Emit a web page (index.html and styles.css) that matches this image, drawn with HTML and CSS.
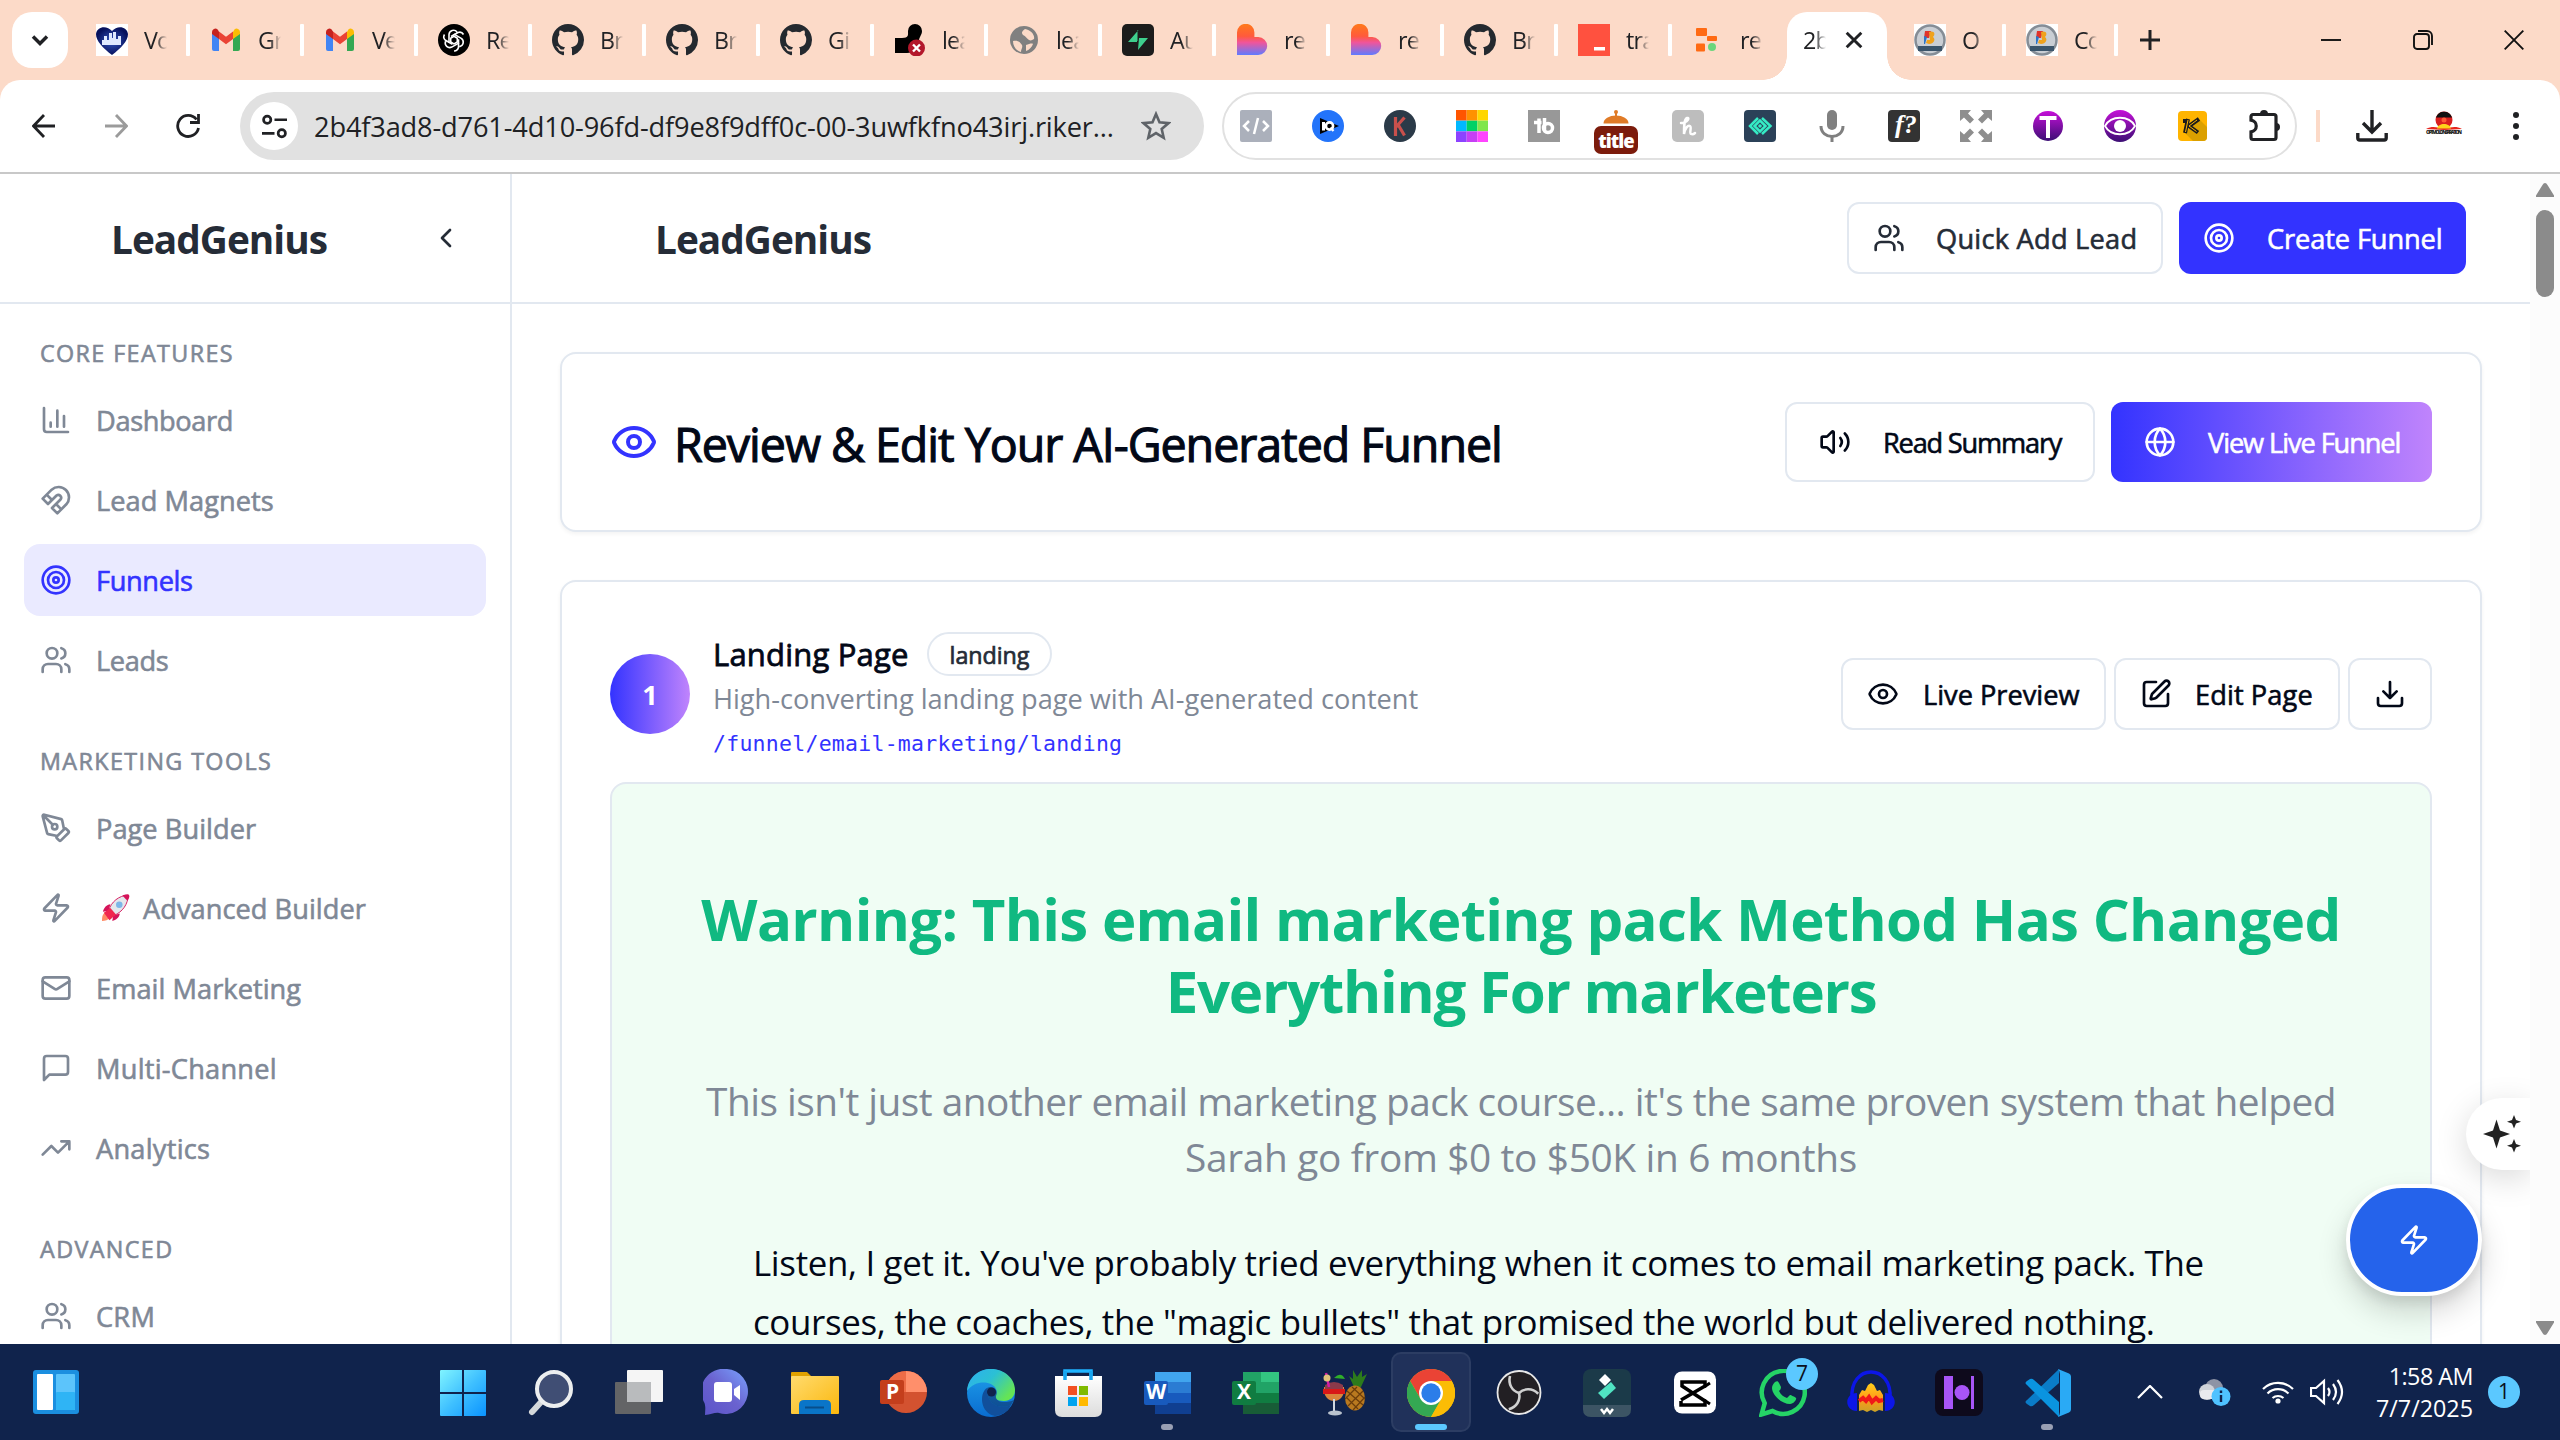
FILE: index.html
```html
<!DOCTYPE html>
<html lang="en">
<head>
<meta charset="utf-8">
<title>LeadGenius</title>
<link rel="stylesheet" href="styles.css">
</head>
<body>
<svg class="defs" aria-hidden="true">
  <defs>
    <linearGradient id="g-win" x1="0" y1="0" x2="1" y2="1"><stop offset="0" stop-color="#80f4ff"/><stop offset=".5" stop-color="#3fc0ff"/><stop offset="1" stop-color="#0a93ff"/></linearGradient>
    <linearGradient id="g-chat" x1="1" y1="0" x2="0" y2="1"><stop offset="0" stop-color="#79a4ff"/><stop offset=".5" stop-color="#6a62cf"/><stop offset="1" stop-color="#5b54c8"/></linearGradient>
    <linearGradient id="g-folder" x1="0" y1="0" x2="1" y2="1"><stop offset="0" stop-color="#ffdb6e"/><stop offset="1" stop-color="#fbb70c"/></linearGradient>
    <linearGradient id="g-edge" x1="0" y1="0" x2="1" y2=".6"><stop offset="0" stop-color="#2eaef0"/><stop offset=".5" stop-color="#2bc0d4"/><stop offset="1" stop-color="#65e455"/></linearGradient>
    <linearGradient id="g-edge2" x1="0" y1="0" x2="0" y2="1"><stop offset="0" stop-color="#1fa0ea"/><stop offset="1" stop-color="#0a6cd0"/></linearGradient>
    <linearGradient id="g-store" x1="0" y1="0" x2="0" y2="1"><stop offset="0" stop-color="#fff"/><stop offset="1" stop-color="#dcdcdc"/></linearGradient>
    <linearGradient id="g-purple" x1="0" y1="0" x2="0" y2="1"><stop offset="0" stop-color="#c510d8"/><stop offset="1" stop-color="#3c0f74"/></linearGradient>
    <linearGradient id="g-heart" x1="0" y1="0" x2="0" y2="1"><stop offset="0" stop-color="#ff7a1a"/><stop offset=".4" stop-color="#ff5a3c"/><stop offset=".6" stop-color="#f0559b"/><stop offset="1" stop-color="#5f7bff"/></linearGradient>
    <linearGradient id="g-aud" x1="0" y1="0" x2="0" y2="1"><stop offset="0" stop-color="#ffcf1a"/><stop offset=".55" stop-color="#ff9a1a"/><stop offset="1" stop-color="#c9a227"/></linearGradient>
    <radialGradient id="g-navy"><stop offset="0" stop-color="#3457c0"/><stop offset="1" stop-color="#06105c"/></radialGradient>

    <symbol id="users" viewBox="0 0 24 24"><path d="M16 21v-2a4 4 0 0 0-4-4H6a4 4 0 0 0-4 4v2"/><circle cx="9" cy="7" r="4"/><path d="M22 21v-2a4 4 0 0 0-3-3.87M16 3.13a4 4 0 0 1 0 7.75"/></symbol>
    <symbol id="target" viewBox="0 0 24 24"><circle cx="12" cy="12" r="10"/><circle cx="12" cy="12" r="6"/><circle cx="12" cy="12" r="2"/></symbol>
    <symbol id="zap" viewBox="0 0 24 24"><path d="M4 14a1 1 0 0 1-.78-1.63l9.9-10.2a.5.5 0 0 1 .86.46l-1.92 6.02A1 1 0 0 0 13 10h7a1 1 0 0 1 .78 1.63l-9.9 10.2a.5.5 0 0 1-.86-.46l1.92-6.02A1 1 0 0 0 11 14z"/></symbol>
    <symbol id="eye" viewBox="0 0 24 24"><path d="M2.062 12.348a1 1 0 0 1 0-.696 10.75 10.75 0 0 1 19.876 0 1 1 0 0 1 0 .696 10.75 10.75 0 0 1-19.876 0"/><circle cx="12" cy="12" r="3"/></symbol>
    <symbol id="github" viewBox="0 0 16 16"><path fill="#24292f" d="M8 0C3.58 0 0 3.58 0 8c0 3.54 2.29 6.53 5.47 7.59.4.07.55-.17.55-.38 0-.19-.01-.82-.01-1.49-2.01.37-2.53-.49-2.69-.94-.09-.23-.48-.94-.82-1.13-.28-.15-.68-.52-.01-.53.63-.01 1.08.58 1.23.82.72 1.21 1.87.87 2.33.66.07-.52.28-.87.51-1.07-1.78-.2-3.64-.89-3.64-3.95 0-.87.31-1.59.82-2.15-.08-.2-.36-1.02.08-2.12 0 0 .67-.21 2.2.82.64-.18 1.32-.27 2-.27.68 0 1.36.09 2 .27 1.53-1.04 2.2-.82 2.2-.82.44 1.1.16 1.92.08 2.12.51.56.82 1.27.82 2.15 0 3.07-1.87 3.75-3.65 3.95.29.25.54.73.54 1.48 0 1.07-.01 1.93-.01 2.2 0 .21.15.46.55.38A8.013 8.013 0 0016 8c0-4.42-3.58-8-8-8z"/></symbol>
    <symbol id="gmail" viewBox="0 0 32 32"><path fill="#4285f4" d="M2 9v16a2 2 0 0 0 2 2h5V14z"/><path fill="#34a853" d="M30 9v16a2 2 0 0 1-2 2h-5V14z"/><path fill="#fbbc04" d="M23 8v7l7-5V8a3.4 3.4 0 0 0-5.400-2.700z"/><path fill="#ea4335" d="M9 15V7.500l7 5.200 7-5.200V15l-7 5.300z"/><path fill="#c5221f" d="M2 8v2l7 5V7.500L7.400 5.300A3.400 3.400 0 0 0 2 8z"/></symbol>
    <symbol id="heart" viewBox="0 0 32 32"><path fill="url(#g-heart)" d="M1 31V8.500a8.700 8.700 0 0 1 17.400 0V13h3.800a9 9 0 0 1 0 18z"/></symbol>
    <symbol id="coin" viewBox="0 0 32 32"><path fill="#fff" d="M0 0h32v32H0z"/><circle cx="16" cy="16" r="14.500" fill="#c9ced4" stroke="#858d96" stroke-width="2.500"/><path fill="#e0342c" d="M11 7h6l-2 7h-5z"/><path fill="#2b75c9" d="M10 12l3 1-2 7h-1z"/><path fill="#f0a21c" d="M15 8c5-2 7 2 4 5 3 2 1 7-4 7l-3-1 1-3h3z"/><path fill="#3b556b" d="M4 22h24v5H4z"/></symbol>
  </defs>
</svg>

<header class="browser">
  <div class="tabstrip">
    <div class="tab-search"><svg viewBox="0 0 24 24"><path d="M6 9l6 6 6-6"/></svg></div>
    <div class="tabs">
      <div class="tab"><svg class="fav" viewBox="0 0 32 32"><path fill="#fff" d="M0 0h32v32H0z"/><path fill="url(#g-navy)" d="M16 31C7 24 0 17 0 10 1 2 11 1 16 7c5-6 15-5 16 3 0 7-7 14-16 21z"/><path fill="#dfe9ff" d="M6 21v-5h2v-4h3v4h2V9h3v5h1V8h3v7h2v-3h3v9z"/></svg><span class="tab-label">Vo</span></div>
      <div class="tab"><svg class="fav"><use href="#gmail"/></svg><span class="tab-label">Gr</span></div>
      <div class="tab"><svg class="fav"><use href="#gmail"/></svg><span class="tab-label">Ve</span></div>
      <div class="tab"><svg class="fav" viewBox="0 0 32 32"><circle cx="16" cy="16" r="16"/><g fill="none" stroke="#fff" stroke-width="1.600"><path id="petal" d="M11 19V10.500a4.500 4.500 0 0 1 8-2.500M13 12.500l7-4a4.500 4.500 0 0 1 5.500 2"/><use href="#petal" transform="rotate(120 16 16)"/><use href="#petal" transform="rotate(240 16 16)"/><path d="M16 12.300l3.300 1.900v3.800L16 19.900 12.700 18v-3.800z"/></g></svg><span class="tab-label">Re</span></div>
      <div class="tab"><svg class="fav"><use href="#github"/></svg><span class="tab-label">Br</span></div>
      <div class="tab"><svg class="fav"><use href="#github"/></svg><span class="tab-label">Br</span></div>
      <div class="tab"><svg class="fav"><use href="#github"/></svg><span class="tab-label">Gi</span></div>
      <div class="tab"><svg class="fav" viewBox="0 0 32 32"><path d="M1 29V14h7c7 0 6-3 6-7a7 7 0 0 1 14 0c0 4-3 6-3 10 0 8-6 12-12 12z"/><circle cx="22.500" cy="24" r="8.500" fill="#b3172b"/><path d="M19 20.500l7 7m0-7l-7 7" stroke="#fff" stroke-width="2.400"/></svg><span class="tab-label">lea</span></div>
      <div class="tab"><svg class="fav" viewBox="0 0 32 32"><circle cx="16" cy="16" r="14" fill="#808080"/><path fill="#fbdac8" d="M5 17c5-1 7 1 9 4 1 3-1 4-1 7C8 27 5 22 5 17zM17 5c-3 2-4 4-2 6 3 1 3 3 6 5 2 1 3 0 5-1 1-4-3-9-9-10zM18 21c3-1 6-2 7-1-1 3-4 6-7 7z"/></svg><span class="tab-label">lea</span></div>
      <div class="tab"><svg class="fav" viewBox="0 0 32 32"><rect width="32" height="32" rx="5" fill="#1c1c1c"/><path fill="#3ecf8e" d="M16.500 6L6 18h9v-1l.5 0V6zM16 26l10-12h-9z"/></svg><span class="tab-label">Au</span></div>
      <div class="tab"><svg class="fav"><use href="#heart"/></svg><span class="tab-label">re</span></div>
      <div class="tab"><svg class="fav"><use href="#heart"/></svg><span class="tab-label">re</span></div>
      <div class="tab"><svg class="fav"><use href="#github"/></svg><span class="tab-label">Br</span></div>
      <div class="tab"><svg class="fav" viewBox="0 0 32 32"><path fill="#ff513f" d="M0 0h32v32H0z"/><path fill="#fff" d="M16 23h11v3.500H16z"/></svg><span class="tab-label">tra</span></div>
      <div class="tab tab-last"><svg class="fav" viewBox="0 0 32 32"><g fill="#ff6a13"><rect x="4" y="4" width="11" height="8" rx="1"/><rect x="15" y="12" width="10" height="5" rx="1"/><rect x="4" y="19.500" width="9" height="8" rx="1"/></g><circle cx="20" cy="23" r="4" fill="#6bd67c"/></svg><span class="tab-label">re</span></div>
    </div>
    <div class="tab-active"><span class="tab-label">2b</span><svg viewBox="0 0 16 16"><path d="M1.500 1.500l13 13m0-13l-13 13"/></svg></div>
    <div class="tabs tabs-right">
      <div class="tab"><svg class="fav"><use href="#coin"/></svg><span class="tab-label">O</span></div>
      <div class="tab"><svg class="fav"><use href="#coin"/></svg><span class="tab-label">Co</span></div>
    </div>
    <svg class="new-tab" viewBox="0 0 20 20"><path d="M10 0v20M0 10h20"/></svg>
    <div class="window-controls">
      <svg viewBox="0 0 20 20"><path d="M0 10h20"/></svg>
      <svg viewBox="0 0 20 20"><rect x="1" y="4" width="15" height="15" rx="3"/><path d="M5 1h9a5 5 0 0 1 5 5v9"/></svg>
      <svg viewBox="0 0 20 20"><path d="M.7.7l18.600 18.600M19.300.7L.7 19.300"/></svg>
    </div>
  </div>
  <div class="toolbar">
    <div class="nav-buttons">
      <svg viewBox="0 0 24 24"><path d="M23 12H2M12 1L1.500 12 12 23"/></svg>
      <svg class="disabled" viewBox="0 0 24 24"><path d="M1 12h21M12 1l10.500 11L12 23"/></svg>
      <svg viewBox="0 0 24 24"><path d="M20.500 5.500A10.500 10.500 0 1 0 22.500 14M22.500 0v8.500H14"/></svg>
    </div>
    <div class="omnibox">
      <span class="site-info"><svg viewBox="0 0 24 24"><circle cx="5" cy="5.500" r="3.500"/><path d="M12 5.500h12M0 18.500h12"/><circle cx="19" cy="18.500" r="3.500"/></svg></span>
      <span class="url">2b4f3ad8-d761-4d10-96fd-df9e8f9dff0c-00-3uwfkfno43irj.riker...</span>
      <svg class="star" viewBox="0 0 30 30"><path d="M15 3l3.500 8.300 9 .8-6.800 5.900 2 8.800L15 22.100l-7.700 4.700 2-8.800-6.800-5.900 9-.8z"/></svg>
    </div>
    <div class="extensions">
      <svg viewBox="0 0 32 32"><rect width="32" height="32" rx="2" fill="#abb0bb"/><path d="M9 11l-5 5 5 5M23 11l5 5-5 5M18 8l-4 16" fill="none" stroke="#fff" stroke-width="2.500"/></svg>
      <svg viewBox="0 0 32 32"><circle cx="16" cy="16" r="16" fill="#2374fa"/><path d="M8 8l19 8-19 8z"/><path d="M11.500 12v8.500" stroke="#fff" stroke-width="3"/><circle cx="17.500" cy="16" r="3.600" fill="#000" stroke="#fff" stroke-width="2.600"/><path d="M18.500 17.500l3 3.500" stroke="#fff" stroke-width="2.200"/></svg>
      <svg viewBox="0 0 32 32"><circle cx="16" cy="16" r="16" fill="#2b3a48"/><path d="M11.500 7v19M20.500 7.500L12 17M14 14.500l6.500 11" fill="none" stroke="#c9504c" stroke-width="3.200"/></svg>
      <svg viewBox="0 0 33 33"><path fill="#ff5500" d="M0 0h11v11H0z"/><path fill="#ff9100" d="M11 0h11v11H11z"/><path fill="#ffd600" d="M22 0h11v11H22z"/><path fill="#00b8ff" d="M0 11h11v11H0z"/><path fill="#00d166" d="M11 11h11v11H11z"/><path fill="#7fe64c" d="M22 11h11v11H22z"/><path fill="#8c43ff" d="M0 22h11v11H0z"/><path fill="#c63ff5" d="M11 22h11v11H11z"/><path fill="#ff45ff" d="M22 22h11v11H22z"/></svg>
      <svg viewBox="0 0 32 32"><path fill="#989898" d="M0 0h32v32H0z"/><path d="M11 8.500v14.500M6 12.500h7.500M16.500 8v13" stroke="#fff" stroke-width="3.500" fill="none"/><circle cx="20" cy="18" r="4.500" fill="none" stroke="#fff" stroke-width="3.500"/></svg>
      <span class="ext-title"><svg viewBox="0 0 32 16"><path fill="#e07b27" d="M3.500 13.500a12.500 8 0 0 1 25 0z"/><path d="M16 6V2" stroke="#e07b27" stroke-width="2"/><circle cx="16" cy="2" r="2" fill="#e07b27"/></svg><b>title</b></span>
      <svg viewBox="0 0 32 32"><rect width="32" height="32" rx="5" fill="#bdbdbd"/><path d="M9 13c7 0 9-6 6-5s-3 9-3 16c1-6 4-9 6-8s-1 7 1 8 3 0 4-1" stroke="#fff" stroke-width="2.500" fill="none" stroke-linecap="round"/></svg>
      <svg viewBox="0 0 32 32"><rect width="32" height="32" rx="4" fill="#2b4158"/><path d="M14 8l-8 8 8 8M18 8l8.500 8-8.500 8M16 10.500L10.500 16l5.500 5.500 5.500-5.500z" stroke="#35ecc5" stroke-width="2.500" fill="none"/><circle cx="16" cy="16" r="1.800" fill="#35ecc5"/></svg>
      <svg viewBox="0 0 32 32"><rect x="11" y="0" width="10" height="20" rx="5" fill="#808080"/><path d="M5 16c0 14 22 14 22 0M16 26v6" stroke="#808080" stroke-width="3" fill="none"/></svg>
      <svg viewBox="0 0 32 32"><rect width="32" height="32" rx="4" fill="#333"/><text x="7" y="23" class="glyph glyph-serif">f?</text></svg>
      <svg viewBox="0 0 32 32"><path fill="#8e8e8e" d="M0 0h11L8 3.500l6 6-4 4-6-6L0 11zM32 0v11l-4-3.500-6 6-4-4 6-6L21 0zM0 32V21l4 3.500 6-6 4 4-6 6 3 3.500zM32 32H21l3-3.500-6-6 4-4 6 6 4-3.500z"/></svg>
      <svg viewBox="0 0 32 32"><circle cx="16" cy="16" r="15" fill="url(#g-purple)"/><path d="M7.500 8h17M16 8v20" stroke="#fff" stroke-width="4"/></svg>
      <svg viewBox="0 0 32 32"><circle cx="16" cy="16" r="16" fill="url(#g-purple)"/><path d="M1 16c6-11 24-11 30 0-6 11-24 11-30 0z" fill="none" stroke="#fff" stroke-width="1.800"/><circle cx="16" cy="16" r="6" fill="#fff"/></svg>
      <svg viewBox="0 0 32 32"><rect x="2" y="1" width="29" height="30" rx="4" fill="#ffb400"/><path fill="#dba000" d="M23 9l8 8v10a4 4 0 0 1-4 4H17l-8-8z"/><path d="M12 9l-3 14M23 9l-10 7 9 6.500M7 11h4" fill="none" stroke="#1b1b1b" stroke-width="4"/><path d="M12 10L9.500 22M21 10l-8 6 7.500 5.500" fill="none" stroke="#ffb400" stroke-width="1"/></svg>
      <svg viewBox="0 0 32 32"><path d="M3 6.500a2 2 0 0 1 2-2h21a2 2 0 0 1 2 2v21a2 2 0 0 1-2 2H5a2 2 0 0 1-2-2v-5.700c7-1 7-10.600 0-11.600z" fill="none" stroke="#202124" stroke-width="3.200"/><path fill="#202124" d="M12 4a4 4 0 0 1 8 0zM28 13a4 4 0 0 1 0 8z"/></svg>
    </div>
    <span class="toolbar-sep"></span>
    <div class="toolbar-end">
      <svg viewBox="0 0 32 32"><path d="M16 0v21M7 13l9 9 9-9M1.800 23v5a2 2 0 0 0 2 2h24.400a2 2 0 0 0 2-2v-5" fill="none" stroke="#202124" stroke-width="3.400"/></svg>
      <svg class="avatar" viewBox="0 0 38 32"><circle cx="19" cy="10" r="8.500" fill="#d91e1e"/><path d="M11 7.500a8.500 8.500 0 0 1 16 0z" fill="#111"/><circle cx="19" cy="10" r="2.500" fill="#ff5a36"/><path d="M1 19c7-4 11-1 18-1s11-3 18 1l-18 1z" fill="#e6241c"/><path d="M12 18.500c1-6 13-6 14 0z" fill="#ffd21a"/><text x="1" y="23.500" class="glyph avatar-text" textLength="36">OPTMOLD NSPIRATION</text></svg>
      <svg viewBox="0 0 32 32"><g fill="#202124"><circle cx="16" cy="5" r="3"/><circle cx="16" cy="16" r="3"/><circle cx="16" cy="27" r="3"/></g></svg>
    </div>
  </div>
</header>

<div class="viewport">
  <div class="app">
    <aside class="sidebar">
      <div class="sidebar-head"><span class="brand">LeadGenius</span><svg class="icon" viewBox="0 0 24 24"><path d="m15 18-6-6 6-6"/></svg></div>
      <nav class="menu">
        <section class="menu-group">
          <h3>CORE FEATURES</h3>
          <a class="tight"><svg class="icon" viewBox="0 0 24 24"><path d="M3 3v16a2 2 0 0 0 2 2h16M18 17V9M13 17V5M8 17v-3"/></svg>Dashboard</a>
          <a><svg class="icon" viewBox="0 0 24 24"><path d="m6 15-4-4 6.750-6.770a7.790 7.790 0 0 1 11 11L13 22l-4-4 6.390-6.360a2.140 2.140 0 0 0-3-3L6 15M5 8l4 4M12 15l4 4"/></svg>Lead Magnets</a>
          <a class="active tight"><svg class="icon"><use href="#target"/></svg>Funnels</a>
          <a class="tight"><svg class="icon"><use href="#users"/></svg>Leads</a>
        </section>
        <section class="menu-group">
          <h3>MARKETING TOOLS</h3>
          <a><svg class="icon" viewBox="0 0 24 24"><path d="M15.707 21.293a1 1 0 0 1-1.414 0l-1.586-1.586a1 1 0 0 1 0-1.414l5.586-5.586a1 1 0 0 1 1.414 0l1.586 1.586a1 1 0 0 1 0 1.414zM18 13l-1.375-6.874a1 1 0 0 0-.746-.776L3.235 2.028a1 1 0 0 0-1.207 1.207L5.350 15.879a1 1 0 0 0 .776.746L13 18M2.300 2.300l7.286 7.286"/><circle cx="11" cy="11" r="2"/></svg>Page Builder</a>
          <a><svg class="icon"><use href="#zap"/></svg><svg class="rocket" viewBox="0 0 30 30"><path fill="#ff8a65" d="M3 20c-3 2-3 6-3 9 3 0 7-1 9-4z"/><path fill="#d5145a" d="M9 11c-4 0-7 4-8 8l6-1zM19 21c0 4-4 7-8 8l1-6z"/><path fill="#e4e8ec" stroke="#d5145a" stroke-width="1" d="M7 18C10 8 18 2 28 1c0 10-6 18-15 22z"/><path fill="#d5145a" d="M29 1c-1-1-5-.5-7 .5 2 2 3 4 5.500 5.500C28.500 5 30 3 29 1z"/><path fill="#f0264f" d="M2 20l7-5 6 7-7 6z"/><circle cx="18.500" cy="11.500" r="3.500" fill="#7db7e8"/></svg>Advanced Builder</a>
          <a><svg class="icon" viewBox="0 0 24 24"><rect x="2" y="4" width="20" height="16" rx="2"/><path d="m22 7-8.970 5.700a1.940 1.940 0 0 1-2.060 0L2 7"/></svg>Email Marketing</a>
          <a class="loose"><svg class="icon" viewBox="0 0 24 24"><path d="M21 15a2 2 0 0 1-2 2H7l-4 4V5a2 2 0 0 1 2-2h14a2 2 0 0 1 2 2z"/></svg>Multi-Channel</a>
          <a class="loose"><svg class="icon" viewBox="0 0 24 24"><path d="M22 7l-8.500 8.500-5-5L2 17M16 7h6v6"/></svg>Analytics</a>
        </section>
        <section class="menu-group">
          <h3>ADVANCED</h3>
          <a class="loose"><svg class="icon"><use href="#users"/></svg>CRM</a>
        </section>
      </nav>
    </aside>

    <main class="main">
      <div class="topbar">
        <span class="brand">LeadGenius</span>
        <div class="topbar-actions">
          <button class="btn btn-lead"><svg class="icon"><use href="#users"/></svg>Quick Add Lead</button>
          <button class="btn btn-primary"><svg class="icon"><use href="#target"/></svg>Create Funnel</button>
        </div>
      </div>
      <div class="content">
        <section class="card card-title">
          <h1><svg class="icon icon-lg"><use href="#eye"/></svg><span>Review &amp; Edit Your AI-Generated Funnel</span></h1>
          <div class="title-actions">
            <button class="btn btn-read"><svg class="icon" viewBox="0 0 24 24"><path d="M11 4.702a.705.705 0 0 0-1.203-.498L6.413 7.587A1.400 1.400 0 0 1 5.416 8H3a1 1 0 0 0-1 1v6a1 1 0 0 0 1 1h2.416a1.400 1.400 0 0 1 .997.413l3.383 3.384A.705.705 0 0 0 11 19.298zM16 9a5 5 0 0 1 0 6M19.364 18.364a9 9 0 0 0 0-12.728"/></svg>Read Summary</button>
            <button class="btn btn-live"><svg class="icon" viewBox="0 0 24 24"><circle cx="12" cy="12" r="10"/><path d="M12 2a14.500 14.500 0 0 0 0 20 14.500 14.500 0 0 0 0-20M2 12h20"/></svg>View Live Funnel</button>
          </div>
        </section>

        <section class="card card-page">
          <div class="page-head">
            <span class="step">1</span>
            <div class="page-info">
              <div class="page-name"><h2>Landing Page</h2><span class="badge">landing</span></div>
              <p class="page-desc">High-converting landing page with AI-generated content</p>
              <p class="page-path">/funnel/email-marketing/landing</p>
            </div>
            <div class="page-actions">
              <button class="btn btn-preview"><svg class="icon"><use href="#eye"/></svg>Live Preview</button>
              <button class="btn btn-edit"><svg class="icon" viewBox="0 0 24 24"><path d="M12 3H5a2 2 0 0 0-2 2v14a2 2 0 0 0 2 2h14a2 2 0 0 0 2-2v-7M18.375 2.625a1 1 0 0 1 3 3l-9.013 9.014a2 2 0 0 1-.853.505l-2.873.84a.5.5 0 0 1-.62-.62l.84-2.873a2 2 0 0 1 .506-.852z"/></svg>Edit Page</button>
              <button class="btn btn-download"><svg class="icon" viewBox="0 0 24 24"><path d="M21 15v4a2 2 0 0 1-2 2H5a2 2 0 0 1-2-2v-4M7 10l5 5 5-5M12 15V3"/></svg></button>
            </div>
          </div>
          <div class="preview">
            <h2 class="headline"><span>Warning: This email marketing pack Method Has Changed</span><br><span class="headline-end">Everything For marketers</span></h2>
            <p class="subhead">This isn't just another email marketing pack course... it's the same proven system that helped<br><span class="subhead-end">Sarah go from $0 to $50K in 6 months</span></p>
            <p class="copy">Listen, I get it. You've probably tried everything when it comes to email marketing pack. The<br>courses, the coaches, the "magic bullets" that promised the world but delivered nothing.</p>
          </div>
        </section>
      </div>
    </main>
  </div>
  <div class="assistant"><svg viewBox="0 0 38 38"><path d="M13.500 4.500l3.500 11 10 3.500-10 3.500-3.500 11-3.500-11L0 19l10-3.500zM31 0l2 5 5 1.800-5 1.800-2 5-2-5-5-1.800L29 5zM31 24l2 5 5 1.800-5 1.800-2 5-2-5-5-1.800 5-1.800z"/></svg></div>
  <div class="fab"><svg class="icon"><use href="#zap"/></svg></div>
  <div class="scrollbar">
    <svg viewBox="0 0 18 14"><path d="M9 0q1.500 0 2.500 2L18 12.500V14H0v-1.500L6.500 2Q7.500 0 9 0z"/></svg>
    <span class="thumb"></span>
    <svg class="down" viewBox="0 0 18 14"><path d="M9 14q1.500 0 2.500-2L18 1.500V0H0v1.500L6.500 12Q7.500 14 9 14z"/></svg>
  </div>
</div>

<footer class="taskbar">
  <svg class="widgets" viewBox="0 0 46 44"><rect width="46" height="44" rx="3" fill="#1b8fe0"/><rect x="4" y="4" width="16" height="36" rx="1" fill="#fff"/><rect x="23" y="4" width="19" height="36" rx="1" fill="#5cc4fb"/><rect x="23" y="22" width="19" height="18" rx="1" fill="#2fb4f5"/></svg>
  <div class="apps">
    <span class="app-slot"><svg viewBox="0 0 48 48"><path fill="url(#g-win)" d="M1 2a1 1 0 0 1 1-1h44a1 1 0 0 1 1 1v44a1 1 0 0 1-1 1H2a1 1 0 0 1-1-1z"/><path d="M24 0v48M0 24h48" stroke="#10224c" stroke-width="2"/></svg></span>
    <span class="app-slot"><svg viewBox="0 0 48 48"><path d="M15 32L5 43" stroke="#d5d8da" stroke-width="6" stroke-linecap="round"/><circle cx="27" cy="20" r="17" fill="#404e74" stroke="#eceeef" stroke-width="4"/></svg></span>
    <span class="app-slot"><svg viewBox="0 0 48 48"><rect x="0" y="13" width="36" height="32" rx="1" fill="#636466"/><rect x="12" y="1" width="36" height="32" rx="1" fill="#f5f5f5"/><path fill="#b9bbbd" d="M12 13h24v20H12z"/></svg></span>
    <span class="app-slot"><svg viewBox="0 0 48 48"><path fill="url(#g-chat)" d="M24 0a22.500 22.500 0 1 1-8 44c-4-1-8 2-14 2 0-4 1-7-.5-12A22.500 22.500 0 0 1 24 0z"/><rect x="11" y="13" width="18" height="20" rx="3" fill="#fff"/><path fill="#fff" d="M31 20l6-4v15l-6-5z"/></svg></span>
    <span class="app-slot"><svg viewBox="0 0 48 48"><path fill="#e0a100" d="M0 4a1 1 0 0 1 1-1h15l5 5v6H0z"/><rect y="7" width="48" height="38" rx="1" fill="url(#g-folder)"/><path fill="#0a75c8" d="M8 45V36q0-5 5-5h22q5 0 5 5v9z"/><path d="M14 38.500h19" stroke="#084e8b" stroke-width="2"/></svg></span>
    <span class="app-slot"><svg viewBox="0 0 48 48"><circle cx="27" cy="23" r="21" fill="#d35230"/><path fill="#ff8f6b" d="M27 2a21 21 0 0 1 21 21H27z"/><path fill="#ed6c47" d="M27 2a21 21 0 0 0-21 21h21z"/><rect x="1" y="11" width="24" height="24" rx="2" fill="#c43e1c"/><text x="7" y="30" class="glyph glyph-app">P</text></svg></span>
    <span class="app-slot"><svg viewBox="0 0 48 48"><circle cx="24" cy="24" r="24" fill="url(#g-edge2)"/><path fill="url(#g-edge)" d="M0 22C1 8 12 0 24 0c14 0 24 10 24 21 0 7-5 11-11 11-8 0-9-3-8-6 1-2 1-4 0-6C26 12 8 10 0 22z"/><path fill="#114f9b" d="M20 19c-8 5-7 25 8 28 9-1 14-6 16-11-11 5-25 0-24-17z"/><path fill="#10224c" d="M20 19c3-2 7-1 9 2 1 2 1 4 0 6-1 6 9 8 18 4l-3 5c-11 5-25 0-24-17z" opacity=".45"/><circle cx="24.500" cy="23" r="4.500" fill="#10224c"/></svg></span>
    <span class="app-slot"><svg viewBox="0 0 48 48"><path d="M10 11V2h26v9" fill="none" stroke="#1fb4ff" stroke-width="3.500"/><path fill="url(#g-store)" d="M0 7h47v34q0 7-7 7H7q-7 0-7-7z"/><path d="M10 2v9M36 2v9" stroke="#18a5f0" stroke-width="3.500"/><path fill="#f25022" d="M13 17h9v9h-9z"/><path fill="#7fba00" d="M24 17h9v9h-9z"/><path fill="#00a4ef" d="M13 28h9v9h-9z"/><path fill="#ffb900" d="M24 28h9v9h-9z"/></svg></span>
    <span class="app-slot running"><svg viewBox="0 0 48 48"><path fill="#41a5ee" d="M12 3h36v10H12z"/><path fill="#2b7cd3" d="M12 13h36v11H12z"/><path fill="#185abd" d="M12 24h36v10H12z"/><path fill="#103f91" d="M12 34h36v11H12z"/><rect x="1" y="12" width="24" height="24" rx="2" fill="#185abd"/><text x="3" y="30" class="glyph glyph-app">W</text></svg></span>
    <span class="app-slot"><svg viewBox="0 0 48 48"><path fill="#21a366" d="M12 3h18v21H12z"/><path fill="#33c481" d="M30 3h18v10H30z"/><path fill="#21a366" d="M30 13h18v11H30z"/><path fill="#107c41" d="M12 24h36v10H12z"/><path fill="#185c37" d="M12 34h36v11H12z"/><rect x="1" y="12" width="24" height="24" rx="2" fill="#107c41"/><text x="6" y="30" class="glyph glyph-app">X</text></svg></span>
    <span class="app-slot"><svg viewBox="0 0 48 48"><path fill="#2c7b1c" d="M35 18L30 7l4 3 0-9 4 7 5-7v7l5-3-6 13z"/><ellipse cx="36" cy="29" rx="10" ry="12.500" fill="#b9791f"/><path d="M28 22l16 14M27 28l12 12M33 18l13 12M44 22L29 37M46 28L34 41M38 18L26 30" stroke="#6b3d0b" stroke-width="1.200"/><path fill="#d9853c" d="M5 18h20c1 10-5 14-10 14S4 28 5 18z"/><path fill="#8a3a4a" d="M6 16q9-6 18 0v4H6z"/><path fill="#d81818" d="M4 20h22v5H4z"/><path d="M15 30v12" stroke="#cfd6df" stroke-width="2"/><ellipse cx="16" cy="44" rx="7" ry="2.500" fill="#b9c2cd"/><path d="M10 18L7 4" stroke="#d21ca5" stroke-width="2.500"/><path fill="#2fae2a" d="M15 9q7-7 11 1z"/><circle cx="8" cy="9" r="3.500" fill="#e0c37a"/></svg></span>
    <span class="app-slot current"><svg viewBox="0 0 48 48"><circle cx="24" cy="24" r="24" fill="#fbbc05"/><path fill="#ea4335" d="M3.200 12A24 24 0 0 1 44.800 12H24L13.600 30z"/><path fill="#34a853" d="M3.200 12a24 24 0 0 0 20.800 36L34.400 30H13.600z"/><path fill="#fbbc05" d="M44.800 12A24 24 0 0 1 24 48l10.400-18L24 12z"/><circle cx="24" cy="24" r="12" fill="#fff"/><circle cx="24" cy="24" r="9.700" fill="#2b7de9"/></svg></span>
    <span class="app-slot"><svg viewBox="0 0 48 48"><circle cx="24" cy="23.500" r="21.500" fill="#221f23" stroke="#e8e8e8" stroke-width="1.800"/><g fill="none" stroke="#d0d0d0" stroke-width="2.600"><path id="obs-arm" d="M24 24c-7-2-11-9-9-17"/><use href="#obs-arm" transform="rotate(120 24 24)"/><use href="#obs-arm" transform="rotate(240 24 24)"/></g></svg></span>
    <span class="app-slot"><svg viewBox="0 0 48 48"><rect width="48" height="48" rx="8" fill="#1b3a49"/><path fill="#3c5464" d="M0 36h48v4q0 8-8 8H8q-8 0-8-8z"/><path fill="#fff" d="M22 5l6 6-6 6-6-6z"/><path fill="#50e3c2" d="M15 24l13-11 5 6-12 11z"/><path d="M18 40l3 4 3-4 3 4 3-4" stroke="#fff" stroke-width="2.500" fill="none"/></svg></span>
    <span class="app-slot"><svg viewBox="0 0 48 48"><rect x="3" y="2.500" width="42" height="42" rx="8" fill="#fff"/><path d="M10 32v4h24v-4L11 17v-4h23v4L10 31" fill="none" stroke="#000" stroke-width="3.500"/><path d="M33 18l6-4M33 31l6 4" stroke="#000" stroke-width="3"/></svg></span>
    <span class="app-slot"><svg viewBox="0 0 48 48"><path d="M2.500 45.500l3.200-11.300A21.500 21.500 0 1 1 13.500 42z" fill="none" stroke="#25d366" stroke-width="4.500"/><path fill="#25d366" d="M16 13c2-1 3-1 4 1l2 4c0 2-1 3-2 4 2 4 5 6 8 7l3-3c1 0 5 2 6 3s-2 6-6 6c-8 0-18-9-18-16 0-2 1-4 3-6z"/></svg><b class="count">7</b></span>
    <span class="app-slot"><svg viewBox="0 0 48 48"><path fill="url(#g-aud)" d="M12 42V26l3-5 3 1 3-6 3-2 3 2 3 6 3-1 3 5v16l-4-1-4 2-4-2-4 2-4-2z"/><path d="M12 32l4-3 3 3 3-4 3 5 4-4 3 3 4-1" stroke="#f01818" stroke-width="4" fill="none"/><path d="M5 30C2-6 46-6 43 30" fill="none" stroke="#0c16e8" stroke-width="3.500"/><path fill="#0c16e8" d="M10 24v18C-3 42-3 24 10 24zM38 24v18c13 0 13-18 0-18z"/></svg></span>
    <span class="app-slot"><svg viewBox="0 0 48 48"><rect width="48" height="47" rx="8" fill="#0e0a1c"/><path fill="#a855f7" d="M9 7h9v33H9zM36 7h3v33h-3z"/><circle cx="27" cy="23.500" r="7.500" fill="#a855f7"/></svg></span>
    <span class="app-slot running"><svg viewBox="0 0 48 48"><path fill="#0a7cc8" d="M36 0L4 31q-3 2 0 4l3 2q2 1 4-1L36 14z"/><path fill="#0a94e0" d="M36 48L4 16q-3-2 0-4l3-2q2-1 4 1l25 22z"/><path fill="#2aaaf5" d="M35 0l11 4.500q2 1 2 3v33q0 2-2 3L35 48q2-2 2-5V5q0-3-2-5z"/></svg></span>
  </div>
  <div class="tray">
    <svg class="tray-up" viewBox="0 0 26 14"><path d="M1 13L13 1l12 12"/></svg>
    <svg class="tray-cloud" viewBox="0 0 34 28"><circle cx="16" cy="10" r="9" fill="#8d93a5"/><circle cx="9" cy="14" r="8" fill="#cfd2d8"/><rect x="2" y="12" width="18" height="9" rx="4" fill="#e9eaee"/><circle cx="23" cy="18.500" r="9.500" fill="#4fc2ff"/><path d="M23 17v7M23 12.500v2.500" stroke="#10224c" stroke-width="2.400"/></svg>
    <svg class="tray-wifi" viewBox="0 0 32 24"><g fill="none" stroke="#fff" stroke-width="2.200"><path d="M1 9a21.500 21.500 0 0 1 30 0M5.500 13.500a15 15 0 0 1 21 0M10.500 18a8.500 8.500 0 0 1 11 0"/></g><circle cx="16" cy="21" r="2.600" fill="#fff"/></svg>
    <svg class="tray-sound" viewBox="0 0 34 28"><path d="M1 10v8h5l8 7V3L6 10zM18 10q3 4 0 8M23 6q6 8 0 16M27.500 2q9 12 0 24" fill="none" stroke="#fff" stroke-width="2.200"/></svg>
    <div class="clock"><span>1:58 AM</span><span class="date">7/7/2025</span></div>
    <span class="notice">1</span>
  </div>
</footer>
</body>
</html>
```
FILE: styles.css
```css
* { box-sizing: border-box; }
html, body { margin: 0; height: 1440px; overflow: hidden; }
body {
  display: flex;
  flex-direction: column;
  width: 2560px;
  background: #fff;
  color: #020817;
  font-family: "Open Sans", "Noto Sans", sans-serif;
  font-size: 27.2px;
}
h1, h2, h3, p { margin: 0; font-weight: inherit; }
svg { display: block; flex: none; -webkit-text-stroke: 0; }
.defs { position: absolute; width: 0; height: 0; }
.glyph { font-family: "Open Sans", sans-serif; fill: #fff; }
.glyph-app { font-size: 21px; font-weight: 700; }
.glyph-serif { font: italic 700 26px "Liberation Serif", serif; }
.avatar-text { font-size: 5px; font-weight: 800; fill: #222; }

/* Browser chrome */
.browser { height: 174px; flex: none; background: #fcdac8; }
.tabstrip { display: flex; align-items: center; height: 80px; padding-left: 12px; }
.tab-search {
  display: grid; place-items: center;
  width: 56px; height: 56px; margin-right: 28px;
  border-radius: 20px; background: #fff;
}
.tab-search svg { width: 28px; fill: none; stroke: #202124; stroke-width: 3; }
.tabs { display: flex; }
.tab { display: flex; align-items: center; width: 114px; height: 32px; }
.tab::after { content: ""; width: 4px; height: 32px; margin-left: 19px; border-radius: 1px; background: #fff; }
.tab-last { width: 95px; }
.tab-last::after { display: none; }
.fav { width: 32px; height: 32px; }
.tab-label {
  width: 23px; margin-left: 16px; overflow: hidden;
  font-size: 23.3px; line-height: 34px; letter-spacing: -.8px; white-space: nowrap; color: #202124;
  -webkit-mask-image: linear-gradient(90deg, #000 50%, transparent);
  mask-image: linear-gradient(90deg, #000 50%, transparent);
}
.tab-active {
  position: relative;
  display: flex; align-items: center; align-self: flex-end;
  width: 100px; height: 68px; margin-right: 27px; padding-bottom: 12px;
  border-radius: 20px 20px 0 0; background: #fff;
}
.tab-active::before, .tab-active::after {
  content: ""; position: absolute; bottom: 0; width: 24px; height: 24px;
}
.tab-active::before { left: -24px; background: radial-gradient(circle at 0 0, transparent 23.5px, #fff 24px); }
.tab-active::after { right: -24px; background: radial-gradient(circle at 100% 0, transparent 23.5px, #fff 24px); }
.tab-active svg { width: 18px; margin-left: 19px; fill: none; stroke: #202124; stroke-width: 2.6; }
.tabs-right .tab { width: 112px; }
.tabs-right .tab::after { margin-left: 17px; }
.new-tab { width: 20px; margin-left: 2px; stroke: #202124; stroke-width: 3; }
.window-controls { display: flex; gap: 71.5px; margin-left: auto; padding-right: 36px; }
.window-controls svg { width: 20px; fill: none; stroke: #111; stroke-width: 1.9; }
.toolbar {
  display: flex; align-items: center;
  height: 94px; padding: 0 28px 0 32px;
  border-bottom: 2px solid #c8c8c8; border-radius: 20px 20px 0 0; background: #fff;
}
.toolbar > * { flex: none; }
.nav-buttons { display: flex; gap: 48px; width: 208px; }
.nav-buttons svg { width: 24px; fill: none; stroke: #202124; stroke-width: 2.8; }
.nav-buttons .disabled { stroke: #9b9b9b; }
.omnibox {
  display: flex; align-items: center;
  width: 964px; height: 68px; margin-right: 18px; padding-left: 10px;
  border-radius: 34px; background: #e1e1e1;
}
.site-info { display: grid; place-items: center; width: 48px; height: 48px; border-radius: 50%; background: #fff; }
.site-info svg { width: 25px; fill: none; stroke: #202124; stroke-width: 2.6; }
.url { width: 827px; margin-left: 16px; letter-spacing: -.15px; white-space: nowrap; color: #202124; }
.star { width: 30px; fill: none; stroke: #5f6368; stroke-width: 2.6; }
.extensions {
  display: flex; align-items: center; gap: 40px;
  width: 1075px; height: 68px; padding-left: 16px;
  border: 2px solid #e1e1e1; border-radius: 34px;
}
.extensions svg { width: 32px; height: 32px; }
.ext-title {
  display: flex; flex-direction: column; align-items: center;
  width: 44px; height: 44px; margin: 12px -6px 0;
}
.extensions .ext-title svg { width: 32px; height: 16px; }
.ext-title b {
  width: 44px; height: 28px; border-radius: 7px; background: #7c1c0c;
  color: #fff; font-size: 18.5px; font-weight: 800; line-height: 29px; letter-spacing: -1px; text-align: center;
}
.toolbar-sep { width: 4px; height: 32px; margin: 0 36px 0 19px; background: #fcdac8; }
.toolbar-end { display: flex; gap: 40px; }
.toolbar-end svg { width: 32px; height: 32px; }
.toolbar-end .avatar { width: 38px; margin: 0 -3px; }

/* Application */
.viewport { position: relative; display: flex; height: 1170px; overflow: hidden; }
.app { display: flex; width: 2530px; }
.icon { width: 32px; height: 32px; fill: none; stroke: currentColor; stroke-width: 2; stroke-linecap: round; stroke-linejoin: round; }
.brand { padding-top: 2px; font-size: 38.8px; font-weight: 700; line-height: 56px; letter-spacing: -1px; color: #252c37; }
.sidebar { width: 512px; flex: none; border-right: 2px solid #e2e8f0; }
.sidebar-head {
  display: flex; align-items: center; justify-content: space-between;
  height: 130px; padding: 0 48px 0 111px;
  border-bottom: 2px solid #e2e8f0; color: #252c37;
}
.menu { display: flex; flex-direction: column; gap: 36px; padding: 20px 24px; }
.menu-group { display: flex; flex-direction: column; gap: 8px; color: #7f8896; -webkit-text-stroke: .6px currentColor; }
.menu-group h3 { height: 60px; margin-bottom: -8px; padding-left: 16px; font-size: 23.3px; line-height: 59px; letter-spacing: 1.4px; }
.menu-group a { display: flex; align-items: center; height: 72px; padding-left: 16px; border-radius: 16px; letter-spacing: .05px; }
.menu-group a.tight { letter-spacing: -.35px; }
.menu-group a.loose { letter-spacing: .25px; }
.menu-group .icon { margin-right: 24px; }
.menu-group .rocket { width: 30px; height: 28px; margin: 0 12px 0 5px; }
.menu-group .active { background: #eaeaff; color: #3333ff; }

.main { flex: 1; min-width: 0; }
.topbar {
  display: flex; align-items: center; justify-content: space-between;
  height: 130px; padding: 0 64px 0 143px; border-bottom: 2px solid #e2e8f0;
}
.topbar-actions { display: flex; gap: 16px; }
.btn {
  display: flex; align-items: center;
  height: 72px; padding: 0;
  border: 2px solid #e2e8f0; border-radius: 12px; background: #fff;
  color: #020817; font: 400 27.2px "Open Sans", "Noto Sans", sans-serif; white-space: nowrap;
  -webkit-text-stroke: .6px currentColor;
}
.btn-lead { width: 316px; padding-left: 24px; gap: 31px; color: #252c37; letter-spacing: .25px; }
.btn-primary { width: 287px; padding-left: 24px; gap: 32px; border: 0; background: #3333ff; color: #fff; letter-spacing: -.1px; }

.content { display: flex; flex-direction: column; gap: 48px; padding: 48px; }
.card { border: 2px solid #e2e8f0; border-radius: 16px; background: #fff; box-shadow: 0 2px 4px rgba(0, 0, 0, .05); }
.card-title { display: flex; align-items: center; justify-content: space-between; height: 180px; padding: 0 48px; }
.card-title h1 {
  display: flex; align-items: center; gap: 16px;
  font-size: 46.6px; font-weight: 400; line-height: 64px; letter-spacing: -1.04px; white-space: nowrap;
  -webkit-text-stroke: 1.1px currentColor;
}
.card-title h1 span { padding-top: 3px; }
.icon-lg { width: 48px; height: 48px; color: #3333ff; }
.title-actions { display: flex; gap: 16px; }
.title-actions .btn { height: 80px; }
.btn-read { width: 310px; padding-left: 32px; gap: 32px; letter-spacing: -1.2px; }
.btn-live {
  width: 321px; padding-left: 33px; gap: 32px; border: 0;
  background: linear-gradient(90deg, #3333ff, #c084fc); color: #fff; letter-spacing: -1.08px;
}
.card-page { height: 900px; padding: 50px 48px 0; }
.page-head { display: flex; align-items: center; height: 124px; }
.step {
  width: 80px; height: 80px; margin-right: 23px; border-radius: 50%;
  background: linear-gradient(90deg, #3333ff, #c084fc);
  color: #fff; font-weight: 700; line-height: 81px; text-align: center;
}
.page-info { height: 124px; }
.page-name { display: flex; align-items: center; height: 44px; }
.page-name h2 { width: 214px; font-size: 31px; font-weight: 400; line-height: 46px; letter-spacing: .2px; -webkit-text-stroke: .8px currentColor; }
.badge {
  width: 125px; height: 44px; border: 2px solid #e2e8f0; border-radius: 22px;
  color: #252c37; font-size: 23.3px; line-height: 42px; letter-spacing: -.05px; text-align: center;
  -webkit-text-stroke: .7px currentColor;
}
.page-desc { margin-top: 3px; color: #7f8896; line-height: 40px; letter-spacing: -.03px; }
.page-path { margin-top: 11px; color: #3333ff; font: 21.5px/28px "DejaVu Sans Mono", monospace; letter-spacing: .26px; }
.page-actions { display: flex; gap: 8px; margin-left: auto; }
.btn-preview { width: 265px; padding-left: 24px; gap: 24px; }
.btn-edit { width: 226px; padding-left: 24px; gap: 23px; letter-spacing: .1px; }
.btn-download { width: 84px; justify-content: center; }

.preview { height: 700px; margin-top: 26px; padding: 99px 0 0; border: 2px solid #e2e8f0; border-radius: 16px; background: #f0fdf4; }
.headline { color: #10b981; font-size: 58.2px; font-weight: 700; line-height: 72px; letter-spacing: -.7px; text-align: center; white-space: nowrap; }
.headline-end { letter-spacing: -1.25px; }
.subhead { margin-top: 46px; color: #7f8896; font-size: 38.8px; line-height: 56px; letter-spacing: -.53px; text-align: center; white-space: nowrap; }
.subhead-end { letter-spacing: -.34px; }
.copy { margin-top: 49px; padding-left: 141px; font-size: 34.9px; line-height: 58.5px; letter-spacing: -.34px; white-space: nowrap; }

.assistant {
  position: absolute; left: 2466px; top: 924px;
  width: 64px; height: 72px; padding: 17px 0 0 17px;
  border-radius: 36px 0 0 36px; background: #fff; box-shadow: 0 8px 32px rgba(0, 0, 0, .15);
}
.assistant svg { width: 38px; fill: #222; }
.fab {
  position: absolute; left: 2346px; top: 1010px;
  display: grid; place-items: center;
  width: 136px; height: 112px; border: 4px solid #fff; border-radius: 56px;
  background: #2563eb; color: #fff; box-shadow: 0 16px 30px rgba(0, 0, 0, .16), 0 6px 12px rgba(0, 0, 0, .08);
}
.scrollbar {
  position: relative;
  display: flex; flex-direction: column; align-items: center;
  width: 30px; padding: 9px 0; background: #fcfcfc;
}
.scrollbar svg { width: 18px; height: 14px; fill: #8b8b8b; }
.scrollbar .down { margin-top: auto; }
.thumb { width: 18px; height: 87px; margin-top: 13px; border-radius: 9px; background: #8b8b8b; }

/* Taskbar */
.taskbar { display: flex; align-items: center; height: 96px; flex: none; padding-left: 33px; background: #10234c; color: #fff; }
.widgets { width: 46px; height: 44px; margin-right: 340px; }
.apps { display: flex; }
.app-slot { position: relative; display: grid; place-items: center; width: 88px; height: 80px; }
.app-slot svg { width: 48px; height: 48px; margin-top: 1px; }
.app-slot.current { margin: 0 4px; width: 80px; border: 2px solid #2c3d63; border-radius: 10px; background: #20315a; }
.running::after, .current::after {
  content: ""; position: absolute; bottom: 2px; width: 12px; height: 6px; border-radius: 3px; background: #9aa0b4;
}
.current::after { bottom: 0; width: 32px; background: #5bc8ff; }
.count {
  position: absolute; right: 9px; top: 6px; width: 32px; height: 32px; border-radius: 50%;
  background: #5bc8ff; color: #0b1020; font-size: 21px; font-weight: 400; line-height: 31px; text-align: center;
}
.tray { display: flex; align-items: center; margin-left: auto; padding-right: 40px; }
.tray-up { width: 26px; margin-right: 35px; fill: none; stroke: #fff; stroke-width: 2.2; }
.tray-cloud { width: 34px; margin-right: 30px; }
.tray-wifi { width: 32px; margin-right: 16px; }
.tray-sound { width: 34px; margin-right: 29px; }
.clock { display: flex; flex-direction: column; width: 100px; margin-right: 15px; font-size: 23.3px; line-height: 32px; text-align: right; letter-spacing: -.5px; }
.clock .date { letter-spacing: 0; }
.notice { width: 32px; height: 32px; border-radius: 50%; background: #5bc8ff; color: #0b1020; font-size: 21px; line-height: 31px; text-align: center; }
```
